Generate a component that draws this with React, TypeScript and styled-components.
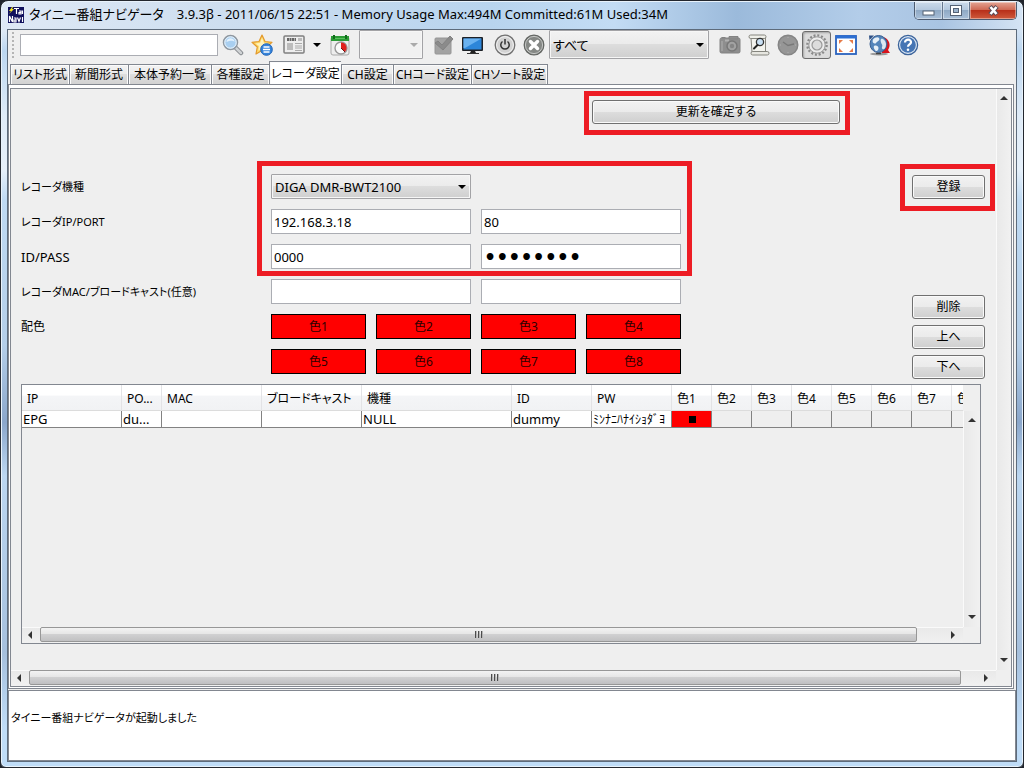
import React from "react";
import styled, { createGlobalStyle, css } from "styled-components";

const FONT = '"Noto Sans", "Noto Sans CJK JP", sans-serif';
const LINE = "#828790";
const FACE = "#efefef";
const MARK = "#ed1c24";

const GlobalStyle = createGlobalStyle`
  * { box-sizing: border-box; }
  body {
    margin: 0;
    background: #20242c;
    color: #000;
    font: 12px/16px ${FONT};
    font-feature-settings: "palt";
  }
  button, input, select { font: inherit; color: inherit; font-feature-settings: inherit; margin: 0; }
`;

const Window = styled.div`
  display: flex;
  flex-direction: column;
  height: 100vh;
  min-height: 560px;
  padding: 1px 6px 5px;
  border: 1px solid #23272e;
  border-radius: 8px 8px 6px 6px;
  background:
    linear-gradient(180deg, transparent 30px, #bcd7f1 50px, #dfebf7 15%, #e6f0fa 22%, #bfdaf3 26%, #b4cee8 45%, #8ba7cb 55%, #bcd7f1 62%, #a6c0dd 85%, #bfdcf7 95%),
    linear-gradient(90deg, #dfe9f5 0%, #cfdff0 20%, #b8d4ee 48%, #c3dcf4 60%, #9bbadb 72%, #b3cde9 84%, #a9c4e2 92%, #d5e4f4 100%);
  box-shadow: inset 0 0 0 1px #e8f2fb;
`;

const TitleBar = styled.header`
  display: flex;
  align-items: flex-start;
  flex: none;
  height: 27px;
`;

const AppIcon = styled.svg`
  flex: none;
  margin: 5px 5px 0 1px;
`;

const Title = styled.h1`
  flex: 1;
  margin: 2px 0 0;
  font-size: 13px;
  line-height: 20px;
  font-weight: 400;
  white-space: pre;
  overflow: hidden;
`;

const WindowButtons = styled.div`
  display: flex;
  flex: none;
  height: 18px;
  border: 1px solid #4c5b70;
  border-top: 0;
  border-radius: 0 0 5px 5px;
  overflow: hidden;
`;

const WindowButton = styled.button<{ $close?: boolean }>`
  display: flex;
  align-items: center;
  justify-content: center;
  width: ${(p) => (p.$close ? 47 : 27)}px;
  padding: 0;
  border: 0;
  border-left: 1px solid #66778e;
  background: ${(p) =>
    p.$close
      ? "linear-gradient(#e3a494, #cf6a55 45%, #b8301a 50%, #cf5a3c)"
      : "linear-gradient(#cbdaea, #b4c8de 45%, #8fa9c5 50%, #a9c0d9)"};
  box-shadow: inset 0 0 0 1px rgba(255, 255, 255, 0.4);
  &:first-child { border-left: 0; }
`;

const Client = styled.div`
  display: flex;
  flex-direction: column;
  flex: 1;
  min-height: 0;
  border: 1px solid #5d6b7b;
  background: ${FACE};
`;

const Toolbar = styled.div`
  display: flex;
  align-items: center;
  flex: none;
  height: 29px;
  padding-left: 4px;
`;

const Grip = styled.div`
  flex: none;
  width: 2px;
  height: 26px;
  margin-right: 6px;
  background: repeating-linear-gradient(#b5b5b5 0 2px, transparent 2px 4px);
`;

const SearchBox = styled.input`
  flex: none;
  width: 198px;
  height: 22px;
  padding: 0 4px;
  border: 1px solid #abadb3;
  background: #fff;
`;

const ToolButton = styled.button<{ $pressed?: boolean; $gap?: number }>`
  display: flex;
  align-items: center;
  justify-content: center;
  flex: none;
  width: 29px;
  height: 28px;
  margin-left: ${(p) => p.$gap ?? 0}px;
  padding: 0;
  border: 1px solid transparent;
  border-radius: 3px;
  background: none;
  ${(p) =>
    p.$pressed &&
    css`
      border-color: #6d6d6d;
      background: #dcdcdc;
      box-shadow: inset 1px 1px 2px #a5a5a5;
    `}
`;

const DropArrow = styled.button`
  display: flex;
  align-items: center;
  justify-content: center;
  width: 17px;
  height: 28px;
  padding: 0;
  border: 0;
  background: none;
`;

const SelectWrap = styled.div<{ $width: number; $height: number; $gap?: number }>`
  position: relative;
  flex: none;
  width: ${(p) => p.$width}px;
  height: ${(p) => p.$height}px;
  margin-left: ${(p) => p.$gap ?? 0}px;
`;

const Select = styled.select`
  appearance: none;
  width: 100%;
  height: 100%;
  padding: 0 20px 0 3px;
  border: 1px solid #a3a3a6;
  border-radius: 1px;
  background: linear-gradient(#f2f2f2, #ebebeb 49%, #dddddd 50%, #cfcfcf);
  box-shadow: inset 0 0 0 1px #f6f6f6;
  font-size: 13px;
  opacity: 1;
  &:disabled { background: #f1f1f1; }
`;

const SelectArrow = styled.svg`
  position: absolute;
  right: 5px;
  top: 50%;
  margin-top: -2px;
  pointer-events: none;
`;

const Tabs = styled.div`
  display: flex;
  align-items: flex-end;
  flex: none;
  height: 25px;
  padding-left: 2px;
`;

const Tab = styled.button<{ $width: number; $selected: boolean }>`
  flex: none;
  width: ${(p) => p.$width}px;
  height: 20px;
  padding: 1px 0 0;
  border: solid ${LINE};
  border-width: 1px 0 0 1px;
  background: linear-gradient(#f3f3f3, #ebebeb 49%, #dedede 50%, #d2d2d2);
  box-shadow: inset 1px 1px 0 #fbfbfb, inset -1px 0 0 #fbfbfb;
  white-space: nowrap;
  &:last-child { border-right-width: 1px; }
  ${(p) =>
    p.$selected &&
    css`
      height: 23px;
      background: #fff;
    `}
`;

const TabPanel = styled.div`
  display: flex;
  flex: 1;
  min-height: 0;
  margin-right: 2px;
  padding: 3px 1px 1px;
  border: 1px solid ${LINE};
  background: #fff;
`;

const ScrollPane = styled.div`
  display: grid;
  grid-template-columns: minmax(0, 1fr) 15px;
  grid-template-rows: minmax(0, 1fr) 16px;
  flex: 1;
  min-width: 0;
  min-height: 0;
  border: 1px solid ${LINE};
  background: ${FACE};
`;

const View = styled.div`
  display: flex;
  flex-direction: column;
  min-height: 0;
  padding: 11px 15px 26px 10px;
`;

const Marked = styled.div`
  position: relative;
  width: fit-content;
`;

const Mark = styled.div<{ $inset: string }>`
  position: absolute;
  inset: ${(p) => p.$inset};
  border: 5px solid ${MARK};
  pointer-events: none;
`;

const ConfirmRow = styled.div`
  flex: none;
  padding-left: 571px;
  margin-bottom: 50px;
`;

const PushButton = styled.button<{ $wide?: boolean }>`
  display: block;
  width: ${(p) => (p.$wide ? 248 : 73)}px;
  height: 24px;
  padding: 0;
  border: 1px solid #707070;
  border-radius: 3px;
  background: linear-gradient(#f2f2f2, #ebebeb 49%, #dddddd 50%, #cfcfcf);
  box-shadow: inset 0 0 0 1px #fafafa;
`;

const Settings = styled.div`
  display: flex;
  justify-content: space-between;
  align-items: flex-start;
  flex: none;
  margin-bottom: 5px;
`;

const Form = styled.form`
  position: relative;
  display: grid;
  grid-auto-rows: 25px;
  row-gap: 10px;
  width: 660px;
`;

const FormRow = styled.div`
  display: grid;
  grid-template-columns: 240px 200px 200px;
  column-gap: 10px;
  align-items: center;
`;

const Caption = styled.label<{ $latin?: boolean }>`
  font-size: ${(p) => (p.$latin ? 13 : 11)}px;
  white-space: nowrap;
`;

const ColourGrid = styled.div`
  display: grid;
  grid-row: span 2;
  grid-template-columns: 240px repeat(4, 95px);
  grid-auto-rows: 25px;
  align-items: center;
  gap: 10px;
`;

const ColourCaption = styled.span`
  grid-column: 1;
`;

const Field = styled.input`
  width: 200px;
  height: 25px;
  padding: 0 2px;
  border: 1px solid #abadb3;
  background: #fff;
  font-size: 13px;
`;

const PasswordField = styled(Field)`
  font-family: "DejaVu Sans", sans-serif;
  font-size: 19px;
  font-weight: 700;
`;

const ColourButton = styled.button`
  height: 25px;
  padding: 0;
  border: 1px solid #000;
  background: #f00;
  color: #2c0000;
`;

const Actions = styled.div`
  display: flex;
  flex-direction: column;
  gap: 6px;
  margin-right: -4px;
  padding-top: 1px;
`;

const RegisterSlot = styled.div`
  margin-bottom: 90px;
`;

const TableFrame = styled.div`
  display: grid;
  grid-template-columns: minmax(0, 1fr) 17px;
  grid-template-rows: 26px minmax(0, 1fr) 16px;
  flex: 1;
  min-height: 120px;
  border: 1px solid ${LINE};
`;

const TableView = styled.div`
  grid-row: 1 / 3;
  overflow: hidden;
`;

const Table = styled.table`
  width: 970px;
  table-layout: fixed;
  border-collapse: separate;
  border-spacing: 0;
`;

const HeadCell = styled.th`
  height: 26px;
  padding: 3px 0 0 5px;
  border-right: 1px solid #e3e3e6;
  border-bottom: 1px solid #dcdcdc;
  background: linear-gradient(#fff 40%, #f4f5f7 45%, #f1f2f4);
  text-align: left;
  font-weight: 400;
  white-space: nowrap;
`;

const Cell = styled.td<{ $fill?: string }>`
  height: 17px;
  padding: 0 0 0 1px;
  border-right: 1px solid #828282;
  border-bottom: 1px solid #828282;
  background: ${(p) => p.$fill ?? "transparent"};
  font-size: 13px;
  line-height: 16px;
  white-space: nowrap;
  overflow: hidden;
`;

const Kana = styled.span`
  font: 12px/14px "Noto Sans CJK JP", sans-serif;
  font-feature-settings: normal;
`;

const Swatch = styled.span`
  display: block;
  width: 7px;
  height: 7px;
  margin: 0 auto;
  background: #000;
`;

const VBar = styled.div`
  display: flex;
  flex-direction: column;
  justify-content: space-between;
  align-items: center;
  padding: 5px 0 6px;
  border-left: 1px solid #fafafa;
  background: linear-gradient(90deg, #e9e9e9, #f1f1f1);
`;

const HBar = styled.div`
  display: flex;
  align-items: center;
  height: 16px;
  padding: 0 6px 2px 4px;
  border-top: 1px solid #fafafa;
  background: linear-gradient(#e9e9e9, #f1f1f1);
`;

const Thumb = styled.div<{ $trail: number }>`
  display: flex;
  align-items: center;
  justify-content: center;
  gap: 1px;
  flex: 1;
  height: 15px;
  margin: 0 ${(p) => p.$trail}px 0 6px;
  border: 1px solid #979797;
  border-radius: 2px;
  background: linear-gradient(#f3f3f3, #e6e6e6 45%, #d0d0d1 50%, #c0c0c2);
`;

const Notch = styled.i`
  width: 2px;
  height: 7px;
  background: linear-gradient(90deg, #4c4c4c 1px, #b5b5b5 1px);
`;

const Log = styled.output`
  display: block;
  flex: none;
  height: 71px;
  margin-top: 1px;
  padding: 19px 2px;
  border: 1px solid ${LINE};
  background: #fff;
  font-size: 11px;
`;

type Direction = "up" | "down" | "left" | "right";
const arrows: Record<Direction, string> = {
  up: "M0 6 4 2l4 4z",
  down: "M0 2h8L4 6z",
  left: "M6 0v8L2 4z",
  right: "M2 0l4 4-4 4z",
};

const Arrow = ({ to }: { to: Direction }) => (
  <svg width="8" height="8" viewBox="0 0 8 8" aria-hidden="true">
    <path d={arrows[to]} fill="#333" />
  </svg>
);

const Caret = () => (
  <svg width="8" height="4" viewBox="0 0 8 4" aria-hidden="true">
    <path d="M0 0h8L4 4z" />
  </svg>
);

const HorizontalBar = ({ trail }: { trail: number }) => (
  <HBar>
    <Arrow to="left" />
    <Thumb $trail={trail}>
      <Notch />
      <Notch />
      <Notch />
    </Thumb>
    <Arrow to="right" />
  </HBar>
);

const VerticalBar = () => (
  <VBar>
    <Arrow to="up" />
    <Arrow to="down" />
  </VBar>
);

const Glyph = ({ children }: { children: React.ReactNode }) => (
  <svg width="22" height="22" viewBox="0 0 22 22" aria-hidden="true">
    {children}
  </svg>
);

const SearchIcon = () => (
  <Glyph>
    <path d="M14 14l5 5" stroke="#85898d" strokeWidth="4.500" strokeLinecap="round" />
    <path d="M14 14l5 5" stroke="#cfd2d4" strokeWidth="2.500" strokeLinecap="round" />
    <circle cx="8.500" cy="8.500" r="7" fill="#a9cff0" stroke="#8f979f" strokeWidth="1.500" />
    <circle cx="8.500" cy="8.500" r="5.700" fill="none" stroke="#eef6fc" />
    <path d="M4.500 8c0-5 8-5 8 0-2-2-5-1-8 0z" fill="#e2f1fd" />
  </Glyph>
);

const StarIcon = () => (
  <Glyph>
    <path d="M11 1l3 6.500 7 .800-5.300 4.700L17 20l-6-3.500L5 20l1.300-7L1 8.300l7-.800z" fill="#fdd968" stroke="#e39a2d" strokeWidth="1.200" strokeLinejoin="round" />
    <path d="M11 4l2 5 4 .500-3 3-3 2-3.500 2L8 12 4.500 9.500 9 9z" fill="#fff3bd" />
    <circle cx="15.500" cy="15.500" r="5.800" fill="#3584dc" stroke="#1f63b5" />
    <path d="M12.500 13h6M12 15.500h7M12.500 18h6" stroke="#fff" strokeWidth="1.300" />
  </Glyph>
);

const NewsIcon = () => (
  <Glyph>
    <rect x="1" y="2" width="20" height="17" rx="1" fill="#eee" stroke="#808080" strokeWidth="1.500" />
    <path d="M4 5.500h9" stroke="#666" strokeWidth="3" strokeDasharray="2 .5" />
    <path d="M15 5.500h4" stroke="#bbb" strokeWidth="3" />
    <rect x="4" y="9" width="6" height="7" fill="#bcbcbc" />
    <path d="M12 9.500h7M12 12h7M12 14h7M12 16.500h7" stroke="#aaa" />
  </Glyph>
);

const CalendarIcon = () => (
  <Glyph>
    <rect x="2" y="3" width="18" height="18" rx="2" fill="#eee" stroke="#aaa" />
    <path d="M2 2h18v5H2z" fill="#2b9b36" />
    <path d="M5 1v4M17 1v4" stroke="#116c1c" strokeWidth="2" />
    <path d="M6 4.500h10" stroke="#58c25c" />
    <circle cx="12" cy="14" r="6" fill="#fafafa" stroke="#999" strokeWidth="1.400" />
    <path d="M12 14V8.500a5.500 5.500 0 0 1 4 9.300z" fill="#e0201c" />
    <path d="M12 14l4 4" stroke="#701010" />
  </Glyph>
);

const CheckIcon = () => (
  <Glyph>
    <rect x="2" y="4" width="16" height="16" rx="1" fill="#a3a3a3" stroke="#969696" />
    <path d="M2 9l3-2 4 4 8-9 3 3-10 11z" fill="#8b8b8b" stroke="#828282" />
  </Glyph>
);

const MonitorIcon = () => (
  <Glyph>
    <rect x="0" y="3" width="21" height="14" rx="1" fill="#1d2126" />
    <rect x="1.500" y="4.500" width="18" height="11" fill="#2d86d9" />
    <path d="M1.500 4.500h18L3 14H1.500z" fill="#6ab2f0" />
    <path d="M9 17h4l1 2H8z" fill="#222" />
    <path d="M5 19.500h12" stroke="#333" />
  </Glyph>
);

const PowerIcon = () => (
  <Glyph>
    <circle cx="11" cy="11" r="9.800" fill="#c2c2c2" stroke="#707070" strokeWidth="1.300" />
    <circle cx="11" cy="11" r="8.400" fill="#d2d2d2" stroke="#f4f4f4" />
    <path d="M8.500 7.500a4.200 4.200 0 1 0 5 0M11 5v5.500" fill="none" stroke="#333" strokeWidth="1.500" />
  </Glyph>
);

const CancelIcon = () => (
  <Glyph>
    <circle cx="11" cy="11" r="9.800" fill="#858885" stroke="#646764" strokeWidth="1.300" />
    <circle cx="11" cy="11" r="8.600" fill="none" stroke="#c5c7c5" />
    <path d="M7.500 7.500l7 7M14.500 7.500l-7 7" stroke="#fff" strokeWidth="3.400" strokeLinecap="round" />
  </Glyph>
);

const CameraIcon = () => (
  <Glyph>
    <rect x="1" y="4" width="20" height="15" rx="1.500" fill="#8e8e8e" stroke="#838383" />
    <path d="M10 5V2.500h9V5z" fill="#8e8e8e" stroke="#838383" />
    <path d="M2.500 4V3h4v1z" fill="#838383" />
    <path d="M6 6.500h4" stroke="#b0b0b0" strokeWidth="2" />
    <circle cx="13" cy="12" r="5" fill="#a2a2a2" stroke="#777" strokeWidth="1.500" />
    <circle cx="13" cy="12" r="2.200" fill="#858585" />
    <path d="M3 7v10" stroke="#a5a5a5" strokeWidth="1.500" />
  </Glyph>
);

const ScriptIcon = () => (
  <Glyph>
    <path d="M3 4h14.500v14H4z" fill="#f3f3ee" stroke="#85857e" />
    <rect x="1" y="1" width="17" height="3.500" rx="1.700" fill="#efefe9" stroke="#85857e" />
    <rect x="3" y="17.500" width="18" height="3.500" rx="1.700" fill="#e6e6e0" stroke="#85857e" />
    <circle cx="12" cy="8" r="3.600" fill="#c9e0f4" stroke="#333" strokeWidth="1.300" />
    <path d="M9.500 11L6 14.500" stroke="#222" strokeWidth="2" strokeLinecap="round" />
  </Glyph>
);

const ClockIcon = () => (
  <Glyph>
    <circle cx="11" cy="11" r="9.800" fill="#969696" stroke="#858585" strokeWidth="1.400" />
    <path d="M6 8l5 3.500 6-1.500" fill="none" stroke="#787878" strokeWidth="1.300" />
    <path d="M11 3v1M11 18v1M3 11h1M18 11h1" stroke="#b0b0b0" />
  </Glyph>
);

const GearIcon = () => (
  <Glyph>
    <circle cx="11" cy="11" r="9.600" fill="none" stroke="#8a8a8a" strokeWidth="2.400" strokeDasharray="2 1.770" />
    <circle cx="11" cy="11" r="8.200" fill="#ececec" stroke="#979797" />
    <circle cx="11" cy="11" r="5" fill="#dcdcdc" stroke="#999" strokeWidth="1.200" />
  </Glyph>
);

const FullScreenIcon = () => (
  <Glyph>
    <rect x="1" y="2" width="20" height="18" fill="#fff" stroke="#2a62bd" strokeWidth="1.800" />
    <path d="M1 3h20" stroke="#2d6fd2" strokeWidth="3" />
    <path d="M4 6h4l-4 4zM18 6h-4l4 4zM4 18h4l-4-4zM18 18h-4l4-4z" fill="#e57a48" />
  </Glyph>
);

const GlobeIcon = () => (
  <Glyph>
    <ellipse cx="11" cy="20" rx="9" ry="1.500" fill="#9a9a9a" />
    <path d="M15 3c7 2 8 9 5 13l2 3h-8v-6l2 2c3-3 2-8-1-12z" fill="#d8141c" />
    <circle cx="10.500" cy="10" r="8.500" fill="#5585ba" stroke="#3a5f92" />
    <path d="M5 5.500C7 3 10 2.500 11 4s0 2.500-1.500 3.500S8 10 6.500 9.500 4 8 5 5.500z" fill="#e8f0f7" />
    <path d="M13 5c2-1 5 2 5 5.500S16 16 14.500 15s.500-3-.500-4.500S12 6 13 5z" fill="#dbe7f2" />
    <path d="M6 12c2-1 4.500 0 4.500 2S9 17.500 8 17s-3-3.500-2-5z" fill="#e8f0f7" />
    <path d="M1 1.500h5L4 3.500 1.500 6z" fill="#2d4f85" />
    <path d="M8 19.500h5" stroke="#444" strokeWidth="1.500" />
  </Glyph>
);

const HelpIcon = () => (
  <Glyph>
    <circle cx="11" cy="11" r="9.600" fill="#dfe9f4" stroke="#3b639b" strokeWidth="1.300" />
    <circle cx="11" cy="11" r="7.800" fill="#4675b4" />
    <path d="M8 8.500c0-4 6.500-3.500 6 0-.300 2-3 2-3 4.300" fill="none" stroke="#fff" strokeWidth="2.200" />
    <circle cx="11" cy="15.800" r="1.300" fill="#fff" />
  </Glyph>
);

const tabs = [
  { name: "リスト形式", width: 59 },
  { name: "新聞形式", width: 59 },
  { name: "本体予約一覧", width: 83 },
  { name: "各種設定", width: 58 },
  { name: "レコーダ設定", width: 72 },
  { name: "CH設定", width: 52 },
  { name: "CHコード設定", width: 78 },
  { name: "CHソート設定", width: 77 },
];

const columns = [
  { name: "IP", width: 100, value: "EPG" },
  { name: "PO...", width: 40, value: "du..." },
  { name: "MAC", width: 100, value: "" },
  { name: "ブロードキャスト", width: 100, value: "" },
  { name: "機種", width: 150, value: "NULL" },
  { name: "ID", width: 80, value: "dummy" },
  { name: "PW", width: 80, value: <Kana>ﾐﾝﾅﾆﾊﾅｲｼｮﾀﾞﾖ</Kana> },
];

const colours = [1, 2, 3, 4, 5, 6, 7, 8];

export default function App() {
  return (
    <>
      <GlobalStyle />
      <Window>
        <TitleBar>
          <AppIcon width="16" height="16" viewBox="0 0 16 16" aria-hidden="true">
            <rect width="16" height="16" fill="#10105c" />
            <path d="M4 0L1 4h2L1 7l5-5H4l1-2z" fill="#f4e624" />
            <path d="M6 1.500h5M8.500 1.500V7M11 4h2v3h-2V5.500h2M14.500 3.500V7M1.500 15V9l3 6V9M6 11h2v4H6v-2h2M9.500 10.500l1.500 4 1.500-4M14.500 10v5" fill="none" stroke="#fff" strokeWidth="1.200" />
          </AppIcon>
          <Title>タイニー番組ナビゲータ　3.9.3β - 2011/06/15 22:51 - Memory Usage Max:494M Committed:61M Used:34M</Title>
          <WindowButtons>
            <WindowButton aria-label="最小化">
              <svg width="13" height="11">
                <rect x="1" y="6" width="11" height="4" fill="#fff" stroke="#556275" />
              </svg>
            </WindowButton>
            <WindowButton aria-label="最大化">
              <svg width="12" height="11">
                <rect x="0.500" y="0.500" width="11" height="10" fill="#fff" stroke="#556275" />
                <rect x="3.500" y="3.500" width="5" height="4" fill="#9bb3cd" stroke="#556275" />
              </svg>
            </WindowButton>
            <WindowButton aria-label="閉じる" $close>
              <svg width="13" height="11">
                <path d="M3 1.500l7 8M10 1.500l-7 8" stroke="#5a4a55" strokeWidth="4.500" />
                <path d="M3.500 2l6 7M9.500 2l-6 7" stroke="#fff" strokeWidth="2.600" />
              </svg>
            </WindowButton>
          </WindowButtons>
        </TitleBar>

        <Client>
          <Toolbar>
            <Grip />
            <SearchBox aria-label="検索" />
            <ToolButton aria-label="検索"><SearchIcon /></ToolButton>
            <ToolButton aria-label="お気に入り"><StarIcon /></ToolButton>
            <ToolButton aria-label="新聞" $gap={3}><NewsIcon /></ToolButton>
            <DropArrow aria-label="日付"><Caret /></DropArrow>
            <ToolButton aria-label="予約"><CalendarIcon /></ToolButton>
            <SelectWrap $width={64} $height={29} $gap={5}>
              <Select disabled aria-label="ページ" />
              <SelectArrow width="8" height="4"><path d="M0 0h8L4 4z" fill="#aaa" /></SelectArrow>
            </SelectWrap>
            <ToolButton aria-label="一括予約" $gap={6}><CheckIcon /></ToolButton>
            <ToolButton aria-label="テレビ"><MonitorIcon /></ToolButton>
            <ToolButton aria-label="電源" $gap={3}><PowerIcon /></ToolButton>
            <ToolButton aria-label="中止"><CancelIcon /></ToolButton>
            <SelectWrap $width={160} $height={29} $gap={1}>
              <Select aria-label="レコーダ">
                <option>すべて</option>
              </Select>
              <SelectArrow width="8" height="4"><path d="M0 0h8L4 4z" /></SelectArrow>
            </SelectWrap>
            <ToolButton aria-label="スナップショット" $gap={6}><CameraIcon /></ToolButton>
            <ToolButton aria-label="ログ"><ScriptIcon /></ToolButton>
            <ToolButton aria-label="時刻"><ClockIcon /></ToolButton>
            <ToolButton aria-label="設定" $pressed><GearIcon /></ToolButton>
            <ToolButton aria-label="全画面"><FullScreenIcon /></ToolButton>
            <ToolButton aria-label="更新" $gap={4}><GlobeIcon /></ToolButton>
            <ToolButton aria-label="ヘルプ"><HelpIcon /></ToolButton>
          </Toolbar>

          <Tabs role="tablist">
            {tabs.map((tab) => {
              const selected = tab.name === "レコーダ設定";
              return (
                <Tab key={tab.name} role="tab" aria-selected={selected} $selected={selected} $width={tab.width}>
                  {tab.name}
                </Tab>
              );
            })}
          </Tabs>

          <TabPanel role="tabpanel">
            <ScrollPane>
              <View>
                <ConfirmRow>
                  <Marked>
                    <PushButton $wide>更新を確定する</PushButton>
                    <Mark $inset="-9px -10px -11px -8px" />
                  </Marked>
                </ConfirmRow>

                <Settings>
                  <Form>
                    <FormRow>
                      <Caption htmlFor="model">レコーダ機種</Caption>
                      <SelectWrap $width={200} $height={25}>
                        <Select id="model">
                          <option>DIGA DMR-BWT2100</option>
                        </Select>
                        <SelectArrow width="8" height="4"><path d="M0 0h8L4 4z" /></SelectArrow>
                      </SelectWrap>
                    </FormRow>
                    <FormRow>
                      <Caption htmlFor="ip">レコーダIP/PORT</Caption>
                      <Field id="ip" defaultValue="192.168.3.18" />
                      <Field aria-label="PORT" defaultValue="80" />
                    </FormRow>
                    <FormRow>
                      <Caption htmlFor="user" $latin>ID/PASS</Caption>
                      <Field id="user" defaultValue="0000" />
                      <PasswordField type="password" aria-label="PASS" defaultValue="password" />
                    </FormRow>
                    <FormRow>
                      <Caption htmlFor="mac">レコーダMAC/ブロードキャスト(任意)</Caption>
                      <Field id="mac" />
                      <Field aria-label="ブロードキャスト" />
                    </FormRow>
                    <ColourGrid>
                      <ColourCaption>配色</ColourCaption>
                      {colours.map((n) => (
                        <ColourButton key={n} type="button" style={{ gridColumn: ((n - 1) % 4) + 2 }}>
                          色{n}
                        </ColourButton>
                      ))}
                    </ColourGrid>
                    <Mark $inset="-13px -11px 98px 236px" />
                  </Form>
                  <Actions>
                    <RegisterSlot>
                      <Marked>
                        <PushButton>登録</PushButton>
                        <Mark $inset="-11px -10px -12px -12px" />
                      </Marked>
                    </RegisterSlot>
                    <PushButton>削除</PushButton>
                    <PushButton>上へ</PushButton>
                    <PushButton>下へ</PushButton>
                  </Actions>
                </Settings>

                <TableFrame>
                  <TableView>
                    <Table>
                      <colgroup>
                        {columns.map((c) => <col key={c.name} width={c.width} />)}
                        {colours.map((n) => <col key={n} width={40} />)}
                      </colgroup>
                      <thead>
                        <tr>
                          {columns.map((c) => <HeadCell key={c.name}>{c.name}</HeadCell>)}
                          {colours.map((n) => <HeadCell key={n}>色{n}</HeadCell>)}
                        </tr>
                      </thead>
                      <tbody>
                        <tr>
                          {columns.map((c) => <Cell key={c.name} $fill="#fff">{c.value}</Cell>)}
                          {colours.map((n) => (
                            <Cell key={n} $fill={n === 1 ? "#f00" : undefined}>
                              {n === 1 && <Swatch />}
                            </Cell>
                          ))}
                        </tr>
                      </tbody>
                    </Table>
                  </TableView>
                  <div />
                  <VerticalBar />
                  <HorizontalBar trail={32} />
                </TableFrame>
              </View>
              <VerticalBar />
              <HorizontalBar trail={21} />
            </ScrollPane>
          </TabPanel>

          <Log>タイニー番組ナビゲータが起動しました</Log>
        </Client>
      </Window>
    </>
  );
}
